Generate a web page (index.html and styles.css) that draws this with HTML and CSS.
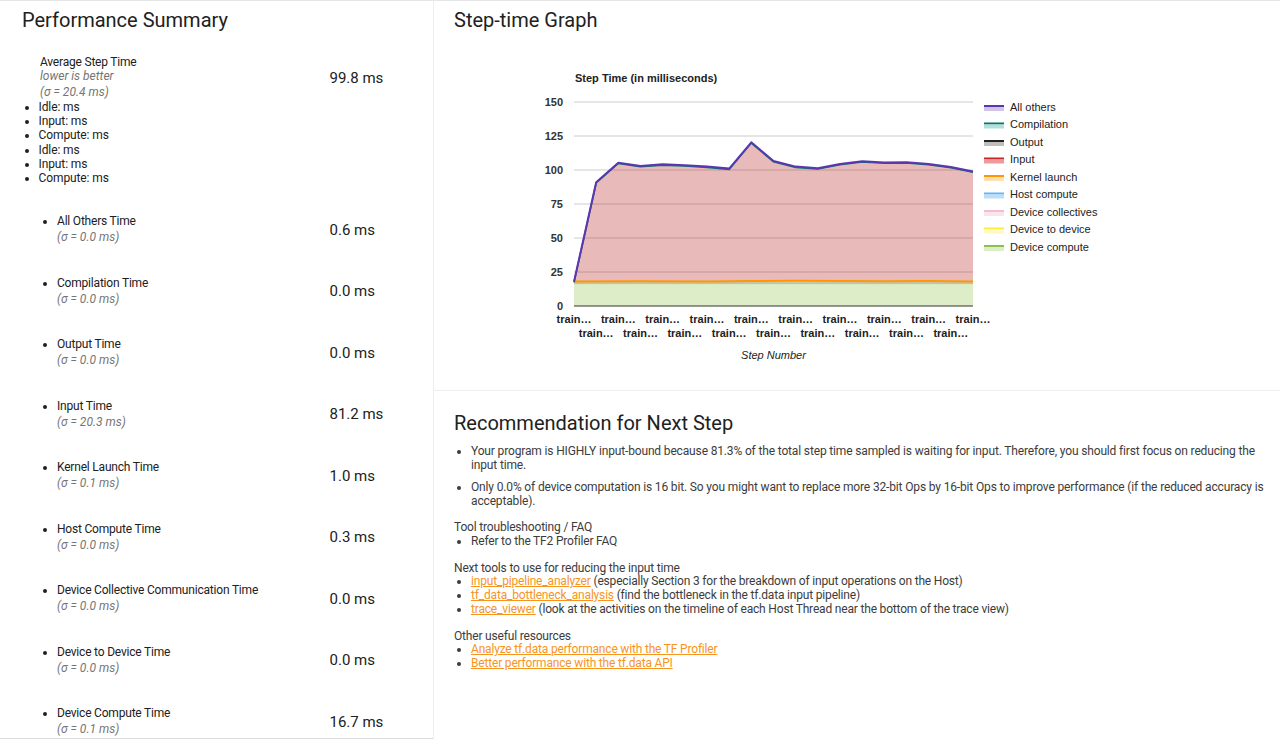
FILE: index.html
```html
<!DOCTYPE html>
<html lang="en">
<head>
<meta charset="utf-8">
<title>Overview</title>
<link rel="stylesheet" href="styles.css">
</head>
<body>
<div class="page">
  <section class="summary">
    <h2 class="card-title">Performance Summary</h2>
    <div class="avg-row">
      <div class="avg-label">
        <div class="name">Average Step Time</div>
        <div class="note">lower is better</div>
        <div class="sigma">(σ = 20.4 ms)</div>
      </div>
      <div class="val">99.8 ms</div>
    </div>
    <ul class="breakdown">
      <li>Idle: ms</li>
      <li>Input: ms</li>
      <li>Compute: ms</li>
      <li>Idle: ms</li>
      <li>Input: ms</li>
      <li>Compute: ms</li>
    </ul>
    <div class="metrics">
      <div class="metric"><div class="label"><div class="name">All Others Time</div><div class="sigma">(σ = 0.0 ms)</div></div><div class="val">0.6 ms</div></div>
      <div class="metric"><div class="label"><div class="name">Compilation Time</div><div class="sigma">(σ = 0.0 ms)</div></div><div class="val">0.0 ms</div></div>
      <div class="metric"><div class="label"><div class="name">Output Time</div><div class="sigma">(σ = 0.0 ms)</div></div><div class="val">0.0 ms</div></div>
      <div class="metric"><div class="label"><div class="name">Input Time</div><div class="sigma">(σ = 20.3 ms)</div></div><div class="val">81.2 ms</div></div>
      <div class="metric"><div class="label"><div class="name">Kernel Launch Time</div><div class="sigma">(σ = 0.1 ms)</div></div><div class="val">1.0 ms</div></div>
      <div class="metric"><div class="label"><div class="name">Host Compute Time</div><div class="sigma">(σ = 0.0 ms)</div></div><div class="val">0.3 ms</div></div>
      <div class="metric"><div class="label"><div class="name">Device Collective Communication Time</div><div class="sigma">(σ = 0.0 ms)</div></div><div class="val">0.0 ms</div></div>
      <div class="metric"><div class="label"><div class="name">Device to Device Time</div><div class="sigma">(σ = 0.0 ms)</div></div><div class="val">0.0 ms</div></div>
      <div class="metric"><div class="label"><div class="name">Device Compute Time</div><div class="sigma">(σ = 0.1 ms)</div></div><div class="val">16.7 ms</div></div>
    </div>
  </section>

  <div class="right">
    <section class="graph">
      <h2 class="card-title">Step-time Graph</h2>
      <svg class="chart" width="700" height="330" viewBox="0 0 700 330" xmlns="http://www.w3.org/2000/svg">
        <g transform="translate(-454,-40)">
          <text class="chart-title" x="575" y="82">Step Time (in milliseconds)</text>
          <g class="grid">
            <line x1="574" y1="102" x2="973" y2="102"/>
            <line x1="574" y1="136" x2="973" y2="136"/>
            <line x1="574" y1="170" x2="973" y2="170"/>
            <line x1="574" y1="204" x2="973" y2="204"/>
            <line x1="574" y1="238" x2="973" y2="238"/>
            <line x1="574" y1="272" x2="973" y2="272"/>
          </g>
          <g class="ylab">
            <text x="563" y="106">150</text>
            <text x="563" y="140">125</text>
            <text x="563" y="174">100</text>
            <text x="563" y="208">75</text>
            <text x="563" y="242">50</text>
            <text x="563" y="276">25</text>
            <text x="563" y="310">0</text>
          </g>
          <!-- device compute -->
          <rect x="574" y="283.3" width="399" height="22.7" fill="#8bc34a" fill-opacity="0.3"/>
          <line x1="574" y1="283.6" x2="973" y2="283.6" stroke="#aed581" stroke-width="1"/>
          <line x1="574" y1="282.8" x2="973" y2="282.8" stroke="#90caf9" stroke-width="1"/>
          <!-- kernel launch band -->
          <rect x="574" y="281.5" width="399" height="1.8" fill="#ff9800" fill-opacity="0.3"/>
          <!-- input area -->
          <polygon fill="#b71c1c" fill-opacity="0.3" points="574,281.7 596.2,182.2 618.3,162.7 640.5,165.9 662.7,164.3 684.8,165.2 707,166.6 729.2,168.6 751.3,142.3 773.5,161.0 795.7,166.6 817.8,168.2 840,163.9 862.2,161.2 884.3,162.5 906.5,162.2 928.7,163.9 950.8,167.0 973,171.4 973,281.5 574,281.5"/>
          <polyline fill="none" stroke="#ff9800" stroke-width="2" points="574,281.5 640,281.3 707,281.5 751,281.0 795,280.7 840,281.0 884,281.2 928,281.0 973,281.5"/>
          <polyline fill="none" stroke="#00796b" stroke-width="1.6" points="574,282.4 596.2,183 618.3,163.5 640.5,166.7 662.7,165.1 684.8,166 707,167.4 729.2,169.4 751.3,143.1 773.5,161.8 795.7,167.4 817.8,169 840,164.7 862.2,162 884.3,163.3 906.5,163 928.7,164.7 950.8,167.8 973,172.2"/>
          <polyline fill="none" stroke="#5e35b1" stroke-width="2" stroke-linejoin="round" points="574,281.7 596.2,182.2 618.3,162.7 640.5,165.9 662.7,164.3 684.8,165.2 707,166.6 729.2,168.6 751.3,142.3 773.5,161.0 795.7,166.6 817.8,168.2 840,163.9 862.2,161.2 884.3,162.5 906.5,162.2 928.7,163.9 950.8,167.0 973,171.4"/>
          <line x1="574" y1="306" x2="973" y2="306" stroke="#333" stroke-width="1"/>
          <g class="xlab">
            <text x="574" y="322.5">train…</text>
            <text x="618.3" y="322.5">train…</text>
            <text x="662.7" y="322.5">train…</text>
            <text x="707" y="322.5">train…</text>
            <text x="751.3" y="322.5">train…</text>
            <text x="795.7" y="322.5">train…</text>
            <text x="840" y="322.5">train…</text>
            <text x="884.3" y="322.5">train…</text>
            <text x="928.7" y="322.5">train…</text>
            <text x="973" y="322.5">train…</text>
            <text x="596.2" y="337">train…</text>
            <text x="640.5" y="337">train…</text>
            <text x="684.8" y="337">train…</text>
            <text x="729.2" y="337">train…</text>
            <text x="773.5" y="337">train…</text>
            <text x="817.8" y="337">train…</text>
            <text x="862.2" y="337">train…</text>
            <text x="906.5" y="337">train…</text>
            <text x="950.8" y="337">train…</text>
          </g>
          <text class="axis-title" x="773.5" y="358.5">Step Number</text>
          <g class="legend">
            <rect x="984" y="105" width="20" height="2" fill="#5e35b1"/><rect x="984" y="107" width="20" height="4" fill="#d1c4e9"/><text x="1010" y="110.5">All others</text>
            <rect x="984" y="122.5" width="20" height="2" fill="#00796b"/><rect x="984" y="124.5" width="20" height="4" fill="#b2dfdb"/><text x="1010" y="128">Compilation</text>
            <rect x="984" y="140" width="20" height="2" fill="#212121"/><rect x="984" y="142" width="20" height="4" fill="#bdbdbd"/><text x="1010" y="145.5">Output</text>
            <rect x="984" y="157.5" width="20" height="2" fill="#c62828"/><rect x="984" y="159.5" width="20" height="4" fill="#ef9a9a"/><text x="1010" y="163">Input</text>
            <rect x="984" y="175" width="20" height="2" fill="#ff9800"/><rect x="984" y="177" width="20" height="4" fill="#ffe0b2"/><text x="1010" y="180.5">Kernel launch</text>
            <rect x="984" y="192.5" width="20" height="2" fill="#64b5f6"/><rect x="984" y="194.5" width="20" height="4" fill="#bbdefb"/><text x="1010" y="198">Host compute</text>
            <rect x="984" y="210" width="20" height="2" fill="#f8bbd0"/><rect x="984" y="212" width="20" height="4" fill="#fce4ec"/><text x="1010" y="215.5">Device collectives</text>
            <rect x="984" y="227.5" width="20" height="2" fill="#ffeb3b"/><rect x="984" y="229.5" width="20" height="4" fill="#fff9c4"/><text x="1010" y="233">Device to device</text>
            <rect x="984" y="245" width="20" height="2" fill="#8bc34a"/><rect x="984" y="247" width="20" height="4" fill="#dcedc8"/><text x="1010" y="250.5">Device compute</text>
          </g>
        </g>
      </svg>
    </section>

    <section class="rec">
      <h2 class="card-title">Recommendation for Next Step</h2>
      <ul class="rec-list">
        <li>Your program is HIGHLY input-bound because 81.3% of the total step time sampled is waiting for input. Therefore, you should first focus on reducing the input time.</li>
        <li>Only 0.0% of device computation is 16 bit. So you might want to replace more 32-bit Ops by 16-bit Ops to improve performance (if the reduced accuracy is acceptable).</li>
      </ul>
      <div class="group">
        <div>Tool troubleshooting / FAQ</div>
        <ul>
          <li>Refer to the TF2 Profiler FAQ</li>
        </ul>
      </div>
      <div class="group">
        <div>Next tools to use for reducing the input time</div>
        <ul>
          <li><a href="#">input_pipeline_analyzer</a> (especially Section 3 for the breakdown of input operations on the Host)</li>
          <li><a href="#">tf_data_bottleneck_analysis</a> (find the bottleneck in the tf.data input pipeline)</li>
          <li><a href="#">trace_viewer</a> (look at the activities on the timeline of each Host Thread near the bottom of the trace view)</li>
        </ul>
      </div>
      <div class="group">
        <div>Other useful resources</div>
        <ul>
          <li><a href="#">Analyze tf.data performance with the TF Profiler</a></li>
          <li><a href="#">Better performance with the tf.data API</a></li>
        </ul>
      </div>
    </section>
  </div>
</div>
</body>
</html>
```

FILE: styles.css
```css
html, body {
  margin: 0;
  padding: 0;
  background: #fff;
}
body {
  font-family: Roboto, "Noto Sans", Arial, sans-serif;
  font-size: 12px;
  color: #212121;
  overflow: hidden;
}
.page {
  display: grid;
  grid-template-columns: 434px 1fr;
  border-top: 1px solid #e6e6e6;
}
.card-title {
  margin: 7px 0 0;
  font-size: 20px;
  line-height: 24px;
  font-weight: 400;
  color: #212121;
}

/* Left summary */
.summary {
  box-sizing: border-box;
  height: 738px;
  overflow: hidden;
  padding: 0 0 0 22px;
  border-right: 1px solid #eeeeee;
  border-bottom: 1px solid #dcdcdc;
}
.avg-row {
  display: grid;
  grid-template-columns: 307.5px auto;
  align-items: center;
  margin-top: 23px;
}
.avg-label {
  margin-left: 18px;
}
.name {
  line-height: 14px;
  letter-spacing: -0.2px;
}
.note {
  line-height: 14px;
  font-style: italic;
  color: #757575;
}
.sigma {
  margin-top: 1px;
  line-height: 16px;
  font-style: italic;
  color: #757575;
}
.val {
  font-size: 15px;
  line-height: 18px;
  color: #212121;
}
.breakdown {
  margin: 0;
  padding-left: 16.5px;
}
.breakdown li {
  line-height: 14.2px;
  letter-spacing: -0.1px;
}
.metrics {
  margin-top: 14px;
}
.metric {
  display: grid;
  grid-template-columns: 307.5px auto;
  align-items: center;
  padding: 15.25px 0;
}
.metric .label {
  display: list-item;
  list-style: disc outside;
  margin-left: 35px;
}

/* Right side */
.right {
  display: flex;
  flex-direction: column;
}
.graph {
  height: 389px;
  padding: 0 20px;
  border-bottom: 1px solid #eeeeee;
}
.chart {
  display: block;
  margin-top: 8px;
}
.chart text {
  font-family: "Liberation Sans", Arial, sans-serif;
  font-size: 11px;
  fill: #222;
}
.chart .chart-title {
  font-weight: bold;
}
.grid line {
  stroke: #cccccc;
  stroke-width: 1;
}
.ylab text {
  text-anchor: end;
  font-weight: bold;
  fill: #333;
}
.xlab text {
  text-anchor: middle;
  font-weight: bold;
  fill: #222;
}
.chart .axis-title {
  text-anchor: middle;
  font-style: italic;
}

.rec {
  padding: 0 11px 0 20px;
  color: #3c3c3c;
}
.rec .card-title {
  margin-top: 20px;
}
.rec ul {
  margin: 0;
  padding-left: 17px;
}
.rec-list {
  margin-top: 9px !important;
}
.rec-list li {
  line-height: 14px;
  letter-spacing: -0.15px;
}
.rec-list li + li {
  margin-top: 8px;
}
.group {
  line-height: 13.6px;
  margin-top: 13.6px;
  letter-spacing: -0.18px;
}
.rec-list + .group {
  margin-top: 13px;
}
.group a {
  color: #f7941e;
  text-decoration: underline;
}
```
